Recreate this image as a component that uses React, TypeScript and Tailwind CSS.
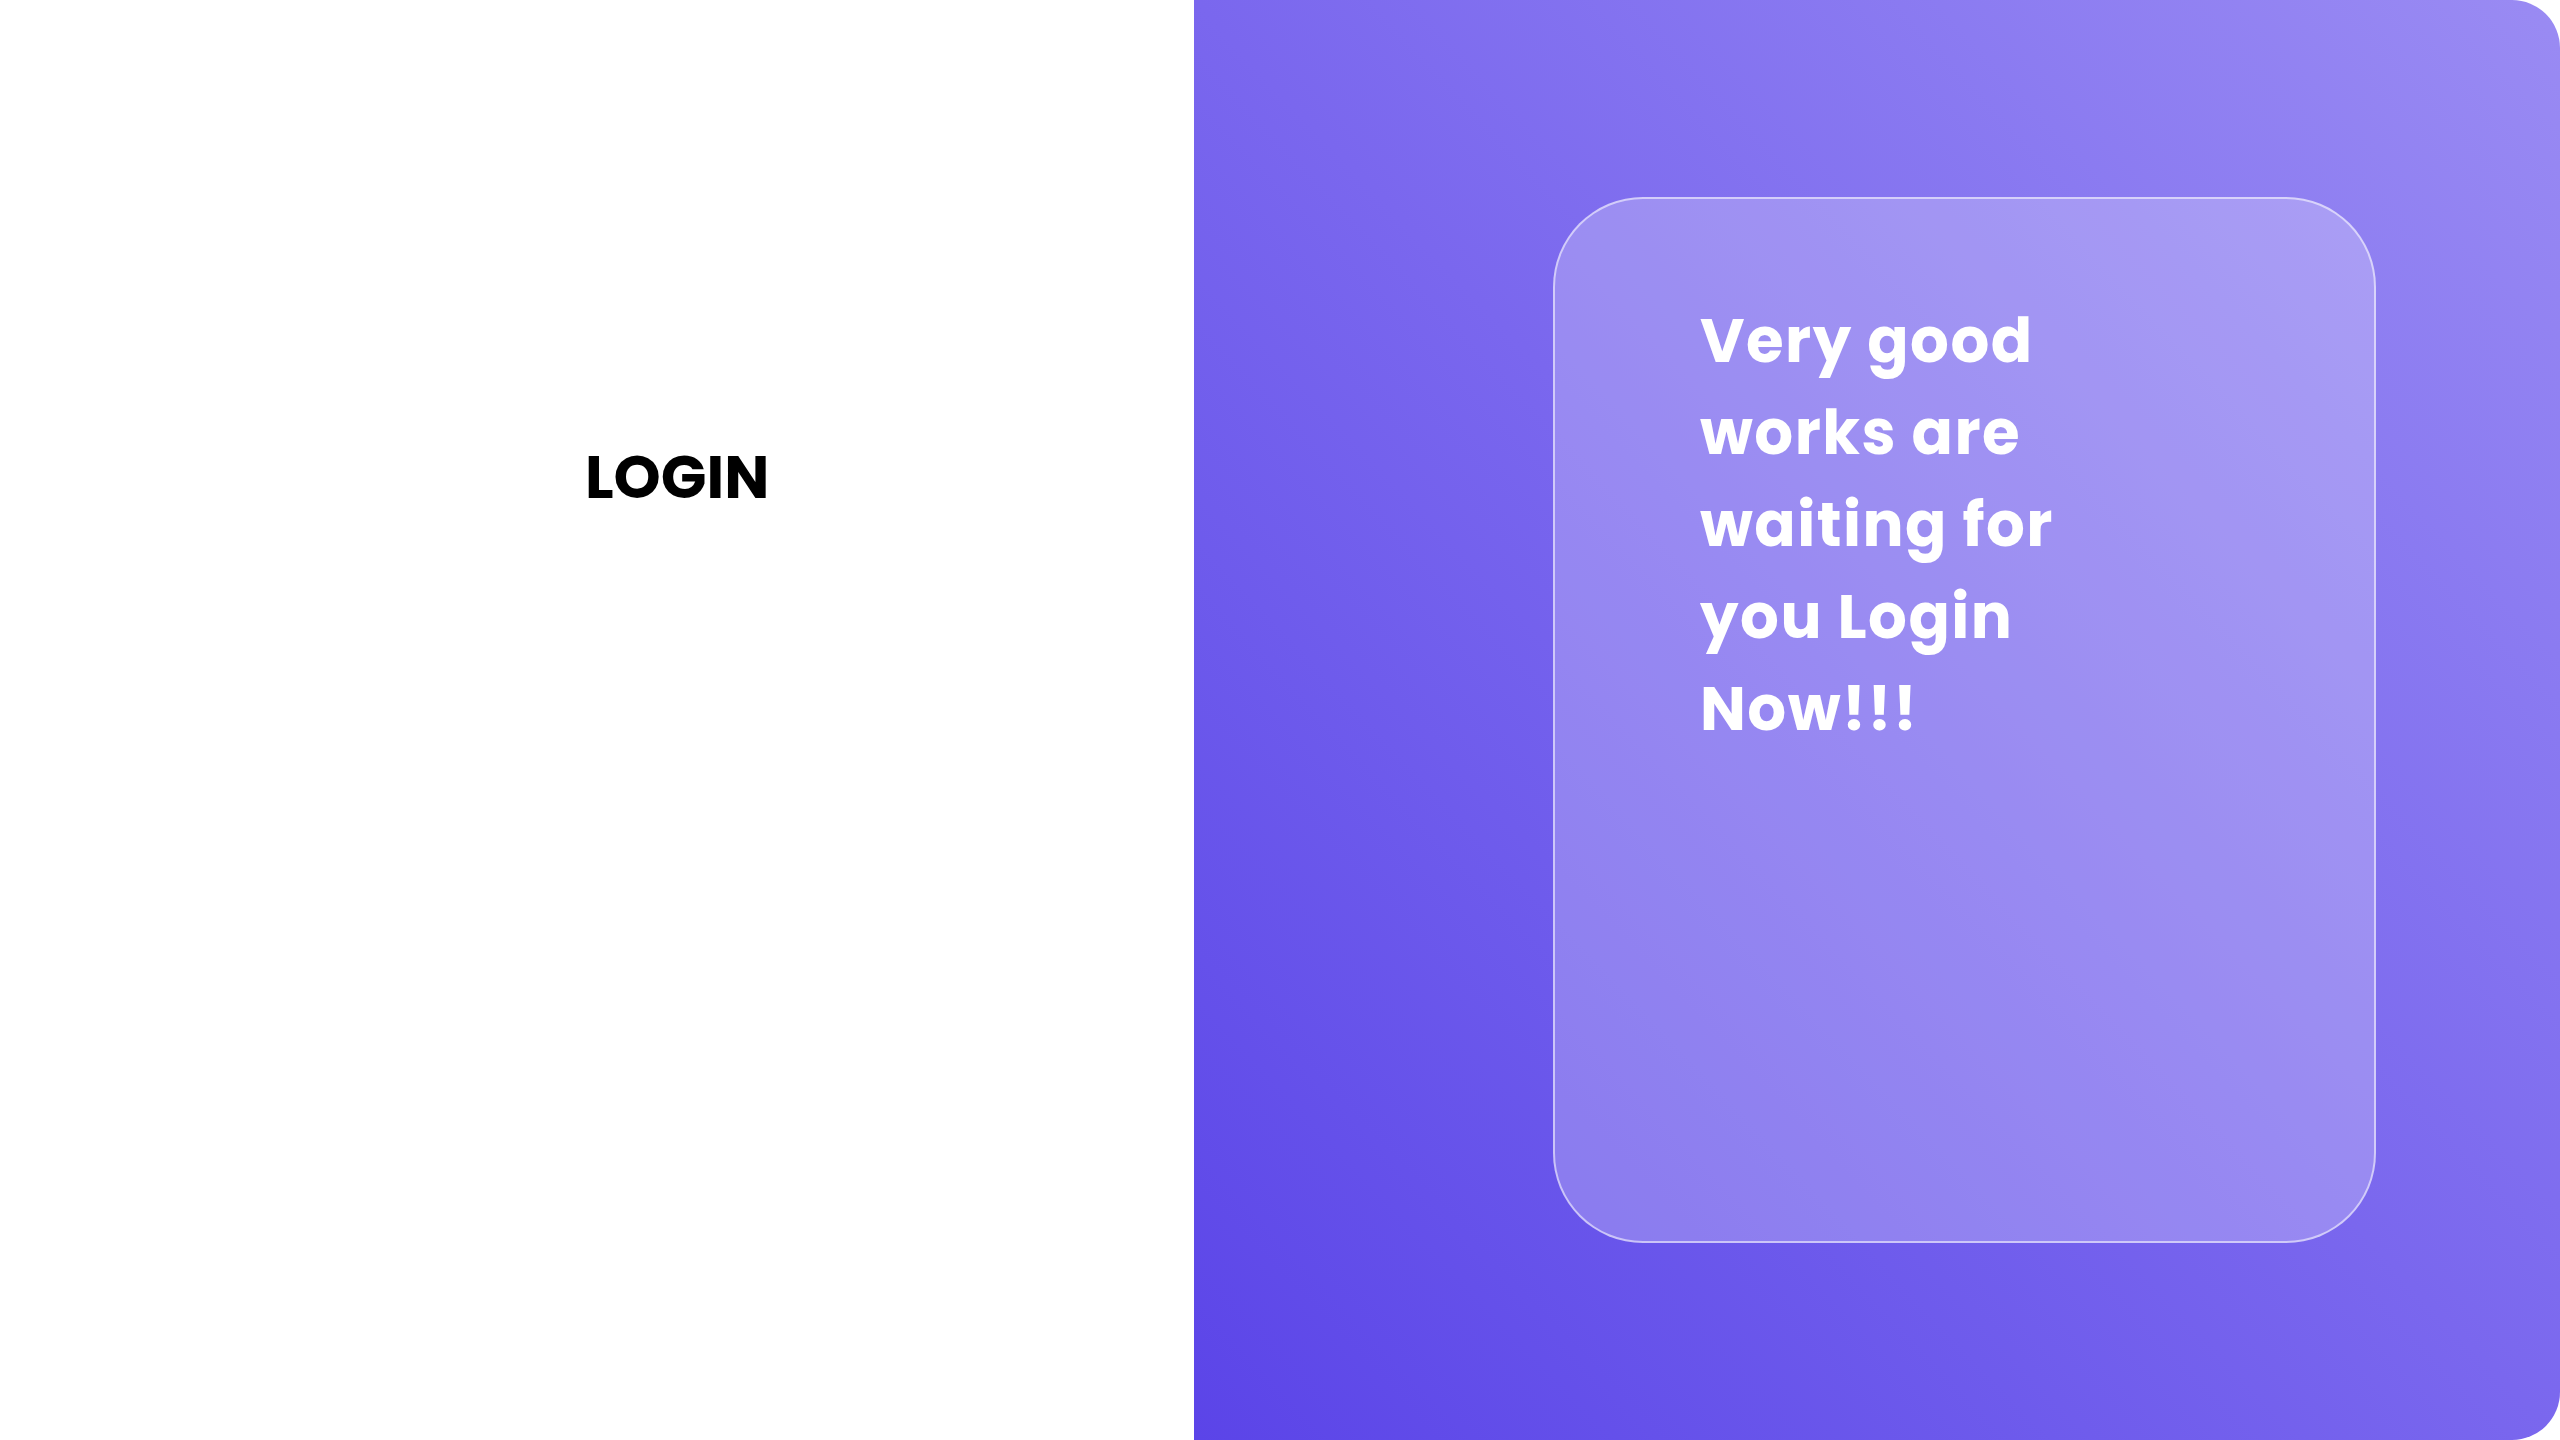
import React from "react";

export default function App() {
  return (
    <div className="flex h-[1440px] w-[2560px] bg-white" style={{ fontFamily: "Poppins, Inter, 'DejaVu Sans', sans-serif" }}>
      <div className="w-[1194px] shrink-0 bg-white pl-[585px] pt-[435px]">
        <h1 className="text-[60px] font-bold leading-[84px] text-black">LOGIN</h1>
      </div>
      <div className="flex flex-1 items-center rounded-r-[48px] bg-gradient-to-tr from-[#5b44e8] via-[#7a67ee] to-[#9a8bf3] pl-[359px]">
        <div className="h-[1046px] w-[823px] rounded-[90px] border-2 border-white/55 bg-white/[0.23] pl-[145px] pt-[96px]">
          <p className="w-[440px] text-[61px] font-bold leading-[92px] tracking-[1.5px] text-white">
            Very good works are waiting for you Login Now!!!
          </p>
        </div>
      </div>
    </div>
  );
}
